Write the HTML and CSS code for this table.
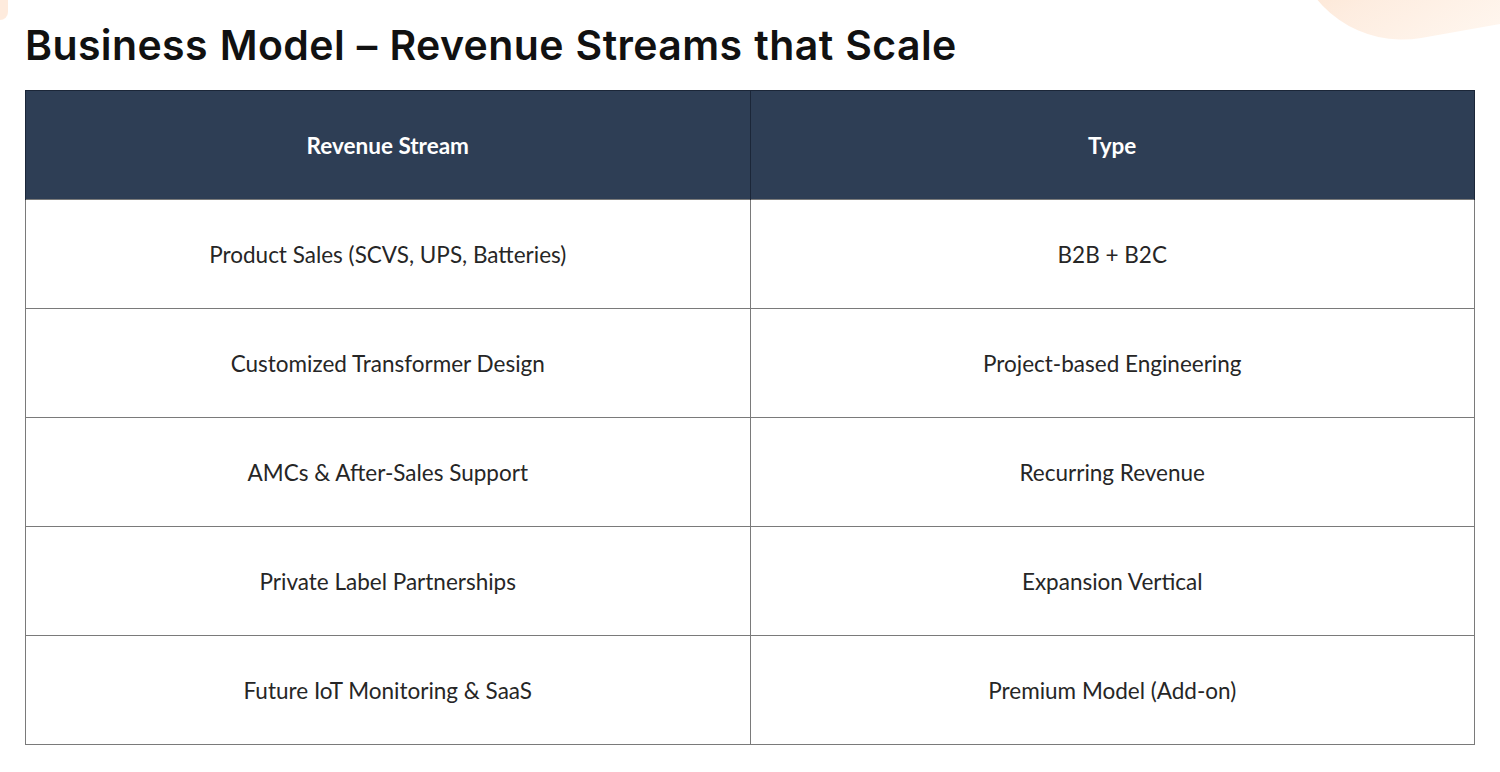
FILE: index.html
```html
<!DOCTYPE html>
<html lang="en">
<head>
<meta charset="utf-8">
<title>Business Model – Revenue Streams that Scale</title>
<link rel="stylesheet" href="styles.css">
</head>
<body>
<div class="slide">
  <div class="blob blob-right"></div>
  <div class="blob blob-left"></div>
  <h1 class="title">Business Model – Revenue Streams that Scale</h1>
  <table class="rev-table">
    <thead>
      <tr><th>Revenue Stream</th><th>Type</th></tr>
    </thead>
    <tbody>
      <tr><td>Product Sales (SCVS, UPS, Batteries)</td><td>B2B + B2C</td></tr>
      <tr><td>Customized Transformer Design</td><td>Project-based Engineering</td></tr>
      <tr><td>AMCs &amp; After-Sales Support</td><td>Recurring Revenue</td></tr>
      <tr><td>Private Label Partnerships</td><td>Expansion Vertical</td></tr>
      <tr><td>Future IoT Monitoring &amp; SaaS</td><td>Premium Model (Add-on)</td></tr>
    </tbody>
  </table>
</div>
</body>
</html>
```

FILE: styles.css
```css
* { box-sizing: border-box; }
html, body { margin: 0; padding: 0; background: #fff; }
.slide {
  position: relative;
  width: 1500px;
  height: 772px;
  overflow: hidden;
  padding: 20px 25px 0 25px;
  font-family: "Lato", "Noto Sans", sans-serif;
}
.blob {
  position: absolute;
  pointer-events: none;
}
.blob-right {
  top: -90px;
  right: -30px;
  width: 230px;
  height: 128px;
  border-radius: 0 0 40px 110px;
  background: linear-gradient(160deg, #fbd6b8 0%, #fde8d8 50%, #fff5ec 100%);
  transform: rotate(-10deg);
  opacity: 0.8;
}
.blob-left {
  top: -12px;
  left: -14px;
  width: 22px;
  height: 32px;
  border-radius: 8px;
  background: #fde3cf;
  opacity: 0.7;
}
.title {
  position: relative;
  margin: 0 0 20px 0;
  font-family: "Inter", "Open Sans", sans-serif;
  font-weight: 600;
  font-size: 41px;
  line-height: 50px;
  color: #111;
  letter-spacing: 0.4px;
  word-spacing: 1px;
}
.rev-table {
  width: 1450px;
  border-collapse: collapse;
  table-layout: fixed;
}
.rev-table th {
  height: 109px;
  background: #2e3e55;
  color: #fff;
  font-weight: 700;
  font-size: 22.5px;
  text-align: center;
  border-left: 1px solid #1b2638;
  border-right: 1px solid #1b2638;
  border-top: 1px solid #1b2638;
}
.rev-table td {
  height: 109px;
  text-align: center;
  font-size: 22.5px;
  color: #262626;
  border: 1px solid #7a7a7a;
}
```
